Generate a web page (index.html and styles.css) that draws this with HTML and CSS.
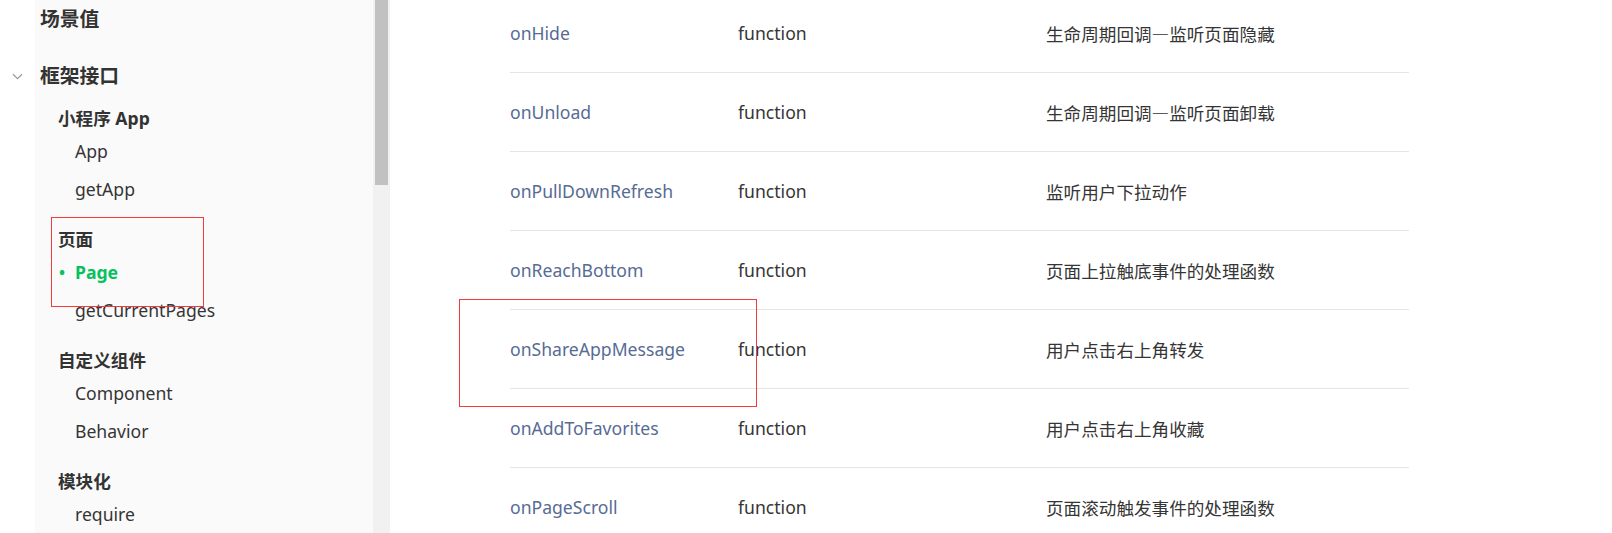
FILE: index.html
```html
<!DOCTYPE html>
<html lang="zh-CN">
<head>
<meta charset="utf-8">
<title>Page</title>
<link rel="stylesheet" href="styles.css">
</head>
<body>
<div class="layout">
  <aside class="sidebar">
    <div class="gutter">
      <svg class="chevron" width="11" height="7" viewBox="0 0 11 7"><path d="M1 1.2 L5.5 5.6 L10 1.2" fill="none" stroke="#9a9a9a" stroke-width="1.2"/></svg>
    </div>
    <nav class="nav">
      <div class="nav-top first">场景值</div>
      <div class="nav-top">框架接口</div>
      <div class="group first-group">
        <div class="group-title">小程序 App</div>
        <div class="item">App</div>
        <div class="item">getApp</div>
      </div>
      <div class="group">
        <div class="group-title">页面</div>
        <div class="item active"><span class="dot">•</span>Page</div>
        <div class="item">getCurrentPages</div>
      </div>
      <div class="group">
        <div class="group-title">自定义组件</div>
        <div class="item">Component</div>
        <div class="item">Behavior</div>
      </div>
      <div class="group">
        <div class="group-title">模块化</div>
        <div class="item">require</div>
      </div>
    </nav>
    <div class="scrollbar"><div class="thumb"></div></div>
  </aside>
  <main class="content">
    <div class="table">
      <div class="row"><span class="name">onHide</span><span class="type">function</span><span class="desc">生命周期回调—监听页面隐藏</span></div>
      <div class="row"><span class="name">onUnload</span><span class="type">function</span><span class="desc">生命周期回调—监听页面卸载</span></div>
      <div class="row"><span class="name">onPullDownRefresh</span><span class="type">function</span><span class="desc">监听用户下拉动作</span></div>
      <div class="row"><span class="name">onReachBottom</span><span class="type">function</span><span class="desc">页面上拉触底事件的处理函数</span></div>
      <div class="row"><span class="name">onShareAppMessage</span><span class="type">function</span><span class="desc">用户点击右上角转发</span></div>
      <div class="row"><span class="name">onAddToFavorites</span><span class="type">function</span><span class="desc">用户点击右上角收藏</span></div>
      <div class="row"><span class="name">onPageScroll</span><span class="type">function</span><span class="desc">页面滚动触发事件的处理函数</span></div>
    </div>
  </main>
  <div class="mark mark-nav"></div>
  <div class="mark mark-table"></div>
</div>
</body>
</html>
```

FILE: styles.css
```css
html, body {
  margin: 0;
  padding: 0;
  background: #ffffff;
  height: 533px;
  overflow: hidden;
}

body {
  font-family: "Noto Sans", "Noto Sans CJK SC", sans-serif;
  color: #353535;
}

.layout {
  position: relative;
  display: flex;
  height: 533px;
  overflow: hidden;
}

.sidebar {
  display: flex;
  flex: 0 0 390px;
  height: 533px;
}

.gutter {
  flex: 0 0 35px;
  background: #ffffff;
}

.chevron {
  display: block;
  margin: 73px 0 0 12px;
}

.nav {
  flex: 0 0 338px;
  background: #fafafa;
  box-sizing: border-box;
  padding-left: 5px;
}

.nav-top {
  font-family: "Noto Sans CJK SC", sans-serif;
  font-weight: 700;
  font-size: 19.8px;
  line-height: 40px;
  color: #333333;
  margin-top: 17px;
}

.nav-top.first {
  margin-top: -2px;
}

.group {
  margin-top: 17px;
  padding-left: 18px;
}

.group.first-group {
  margin-top: 9px;
}

.group-title {
  font-family: "Noto Sans", "Noto Sans CJK SC", sans-serif;
  font-weight: 700;
  font-size: 17.6px;
  line-height: 28px;
  color: #333333;
}

.item {
  position: relative;
  font-size: 17.6px;
  line-height: 38px;
  padding-left: 17px;
  color: #353535;
}

.item.active {
  color: #07c160;
  font-weight: 700;
}

.dot {
  position: absolute;
  left: 1px;
  top: 0;
  font-size: 16px;
}

.scrollbar {
  flex: 0 0 17px;
  background: #f1f1f1;
  box-sizing: border-box;
  padding: 0 2px;
}

.thumb {
  height: 185px;
  background: #c1c1c1;
}

.content {
  flex: 1;
  padding-left: 120px;
  margin-top: -6px;
}

.table {
  width: 899px;
}

.row {
  display: grid;
  grid-template-columns: 228px 308px 1fr;
  align-items: center;
  height: 78px;
  border-bottom: 1px solid #e5e5e5;
  font-size: 17.6px;
}

.name {
  color: #576b95;
}

.type {
  color: #353535;
}

.desc {
  font-family: "Noto Sans CJK SC", sans-serif;
  color: #353535;
}

.mark {
  position: absolute;
  border: 1px solid #f23c3c;
  box-sizing: border-box;
  pointer-events: none;
}

.mark-nav {
  left: 51px;
  top: 217px;
  width: 153px;
  height: 90px;
}

.mark-table {
  left: 459px;
  top: 299px;
  width: 298px;
  height: 108px;
}
```
